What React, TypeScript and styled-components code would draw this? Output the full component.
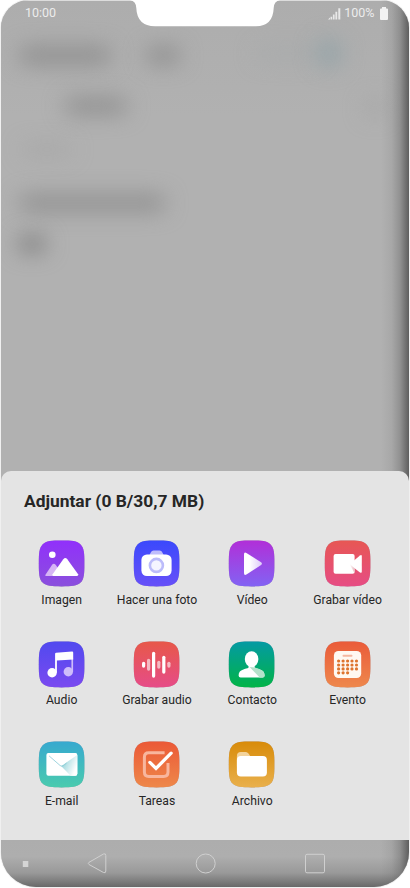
import React from 'react';
import styled, { createGlobalStyle } from 'styled-components';

const GlobalStyle = createGlobalStyle`
  html, body { margin: 0; padding: 0; background: #fff; overflow: hidden; }
  * { box-sizing: border-box; }
`;

const Phone = styled.main`
  position: relative;
  display: flex;
  flex-direction: column;
  width: 408px;
  height: 887px;
  margin: 0 1px 1px;
  overflow: hidden;
  border-radius: 28px 28px 35px 35px;
  background: #b1b1b1;
  box-shadow: 0 0 0 1px #f0f0f0;
  color: #262626;
  font-family: Roboto, sans-serif;
`;

const Backdrop = styled.section`
  position: relative;
  flex: none;
  height: 481px;
  border-top: 1px solid #dcdcdc;
  background: linear-gradient(#adadad, #b1b1b1 24%, #b1b1b1);
`;

const Smudge = styled.i<{ $x: number; $y: number; $w: number; $h: number; $color?: string; $soft?: number }>`
  position: absolute;
  left: ${(p) => p.$x}px;
  top: ${(p) => p.$y}px;
  width: ${(p) => p.$w}px;
  height: ${(p) => p.$h}px;
  border-radius: 10px;
  background: ${(p) => p.$color ?? '#898989'};
  filter: blur(${(p) => p.$soft ?? 11}px);
`;

const EdgeShade = styled.div`
  position: absolute;
  inset: 0 0 0 auto;
  width: 28px;
  background: linear-gradient(90deg, rgba(85, 85, 85, 0), rgba(85, 85, 85, 0.1) 38%, rgba(85, 85, 85, 0.35) 68%, rgba(80, 80, 80, 0.85));
`;

const StatusBar = styled.header`
  position: relative;
  display: flex;
  align-items: center;
  justify-content: space-between;
  height: 24px;
  padding: 0 21.5px 0 24px;
  color: #ececec;
  font-size: 12.5px;
  line-height: 24px;
`;

const StatusGroup = styled.div`
  display: flex;
  align-items: center;
`;

const Percent = styled.span`
  margin: 0 5px 0 3px;
`;

const Notch = styled.svg`
  position: absolute;
  top: -1px;
  left: 129px;
`;

const Sheet = styled.section`
  position: relative;
  flex: none;
  height: 369px;
  margin-top: -10px;
  padding: 19px 14px 0 13px;
  border-radius: 10px 10px 0 0;
  background: #e4e4e4;
`;

const Title = styled.h1`
  margin: 0 0 0 10px;
  font-size: 17.4px;
  line-height: 22px;
  font-weight: 700;
`;

const Grid = styled.div`
  display: grid;
  grid-template-columns: repeat(4, 95.3px);
  grid-auto-rows: 100.6px;
  margin-top: 28px;
`;

const Item = styled.button`
  display: flex;
  flex-direction: column;
  align-items: center;
  padding: 0;
  border: 0;
  background: none;
  color: inherit;
  font: 12.2px/16px Roboto, sans-serif;
  white-space: nowrap;
`;

const Tile = styled.svg`
  flex: none;
  display: block;
  margin-bottom: 2.5px;
  overflow: visible;
  filter: drop-shadow(0 0.8px 0.7px rgba(40, 20, 60, 0.3));
`;

const NavBar = styled.nav`
  position: relative;
  flex: 1;
  background: linear-gradient(#adadad 0, #aeaeae 35%, #999 70%, #696969);
`;

const NavIcons = styled.svg`
  position: relative;
  display: block;
`;

const SQUIRCLE = 'M23 .2C33 .2 38.5 .5 42 4 45.5 7.5 45.8 13 45.8 23S45.5 38.7 42 42.2 33 46 23 46 7.5 45.7 4 42.2 .2 33 .2 23 .5 7.5 4 4 13 .2 23 .2Z';

type Entry = { id: string; label: string; from: string; to: string; art: React.ReactNode };

const bars = [
  [10, 6, 1], [15, 12, 0.6], [20, 26, 1], [25.2, 8, 0.6], [30.2, 18, 1], [35.3, 6, 0.6],
];
const days = [19.6, 23.6, 27.5, 31.4].flatMap((y, row) =>
  [14, 18.5, 23, 27.4, 31.9].slice(0, row === 3 ? 3 : 5).map((x) => [x, y]),
);

const entries: Entry[] = [
  {
    id: 'image', label: 'Imagen', from: '#9130fb', to: '#8a50dc',
    art: (
      <>
        <circle cx="13.7" cy="14.3" r="3.3" fill="#fff" />
        <path d="M7 34 13.5 24.3Q15.2 22.3 17 24.3L22 31 17 35.6H8Q6 35.6 7 34Z" fill="#d6b5f5" />
        <path d="M14 33.9 24.7 18.8Q26.7 16.5 28.7 18.8L39.5 33.9Q40 35.6 38.3 35.6H15Q13.2 35.6 14 33.9Z" fill="#fff" />
      </>
    ),
  },
  {
    id: 'photo', label: 'Hacer una foto', from: '#3b49fc', to: '#6750f8',
    art: (
      <>
        <path d="M15.5 15C17 13 17.5 10 20 10H26C28.5 10 29 13 30.5 15Z" fill="#bfbdfb" />
        <rect x="7.8" y="14" width="30.2" height="21.7" rx="5.5" fill="#fff" />
        <circle cx="22.8" cy="25" r="6.5" fill="#f5f5ff" stroke="#bcbcfa" strokeWidth="2.6" />
      </>
    ),
  },
  {
    id: 'video', label: 'Vídeo', from: '#b12fd8', to: '#8263f3',
    art: <path d="M15.4 14Q15.4 11.2 17.8 12.5L32.5 21.8Q34.2 23.2 32.5 24.6L17.8 34.2Q15.4 35.5 15.4 32.5Z" fill="url(#play-fade)" />,
  },
  {
    id: 'record', label: 'Grabar vídeo', from: '#e75754', to: '#e64c84',
    art: (
      <>
        <rect x="9" y="13.7" width="21" height="19.7" rx="2" fill="#fff" />
        <path d="M27 22 35.4 15Q37.2 13.8 37.2 16V31Q37.2 33.2 35.4 32L27 25.5Z" fill="#fff" />
        <path d="M25 23.5 30 27.8V33L25 23.5Z" fill="url(#lens-fade)" />
      </>
    ),
  },
  {
    id: 'audio', label: 'Audio', from: '#5149ef', to: '#7a4af0',
    art: (
      <>
        <circle cx="29.7" cy="30.4" r="4.7" fill="#cebcfa" />
        <path d="M32.8 17H34.5V30.4H32.8Z" fill="#cebcfa" />
        <circle cx="13.5" cy="31.3" r="4.7" fill="#fff" />
        <path d="M16.5 12.5Q16.5 11.5 17.5 11.4L33.5 10.2Q34.6 10.2 34.6 11.2V18L18.3 19.2V31.3H16.5Z" fill="#fff" />
      </>
    ),
  },
  {
    id: 'voice', label: 'Grabar audio', from: '#e75849', to: '#e64c88',
    art: bars.map(([x, h, o]) => (
      <rect key={x} x={x - 1.6} y={23.3 - h / 2} width="3.2" height={h} rx="1.6" fill="#fff" fillOpacity={o} />
    )),
  },
  {
    id: 'contact', label: 'Contacto', from: '#049aa3', to: '#02b447',
    art: (
      <>
        <path d="M20 22H26V26C28 28 36 27 36 34Q36 36 34 36H12Q10 36 10 34C10 27 18 28 20 26Z" fill="#fff" />
        <path d="M21 25.5 26.5 26C29 28 36 27 36 34Q36 36 34 36H31Z" fill="#b5e2cb" />
        <ellipse cx="23" cy="17.7" rx="6.8" ry="7.9" fill="#fff" />
      </>
    ),
  },
  {
    id: 'event', label: 'Evento', from: '#ea5b39', to: '#ee884d',
    art: (
      <>
        <rect x="9.3" y="9.5" width="27.3" height="27.2" rx="4.5" fill="#fff8f2" />
        <rect x="17.9" y="13.4" width="10" height="1.9" rx="0.9" fill="#f5b6a0" />
        {days.map(([x, y]) => <circle key={`${x}-${y}`} cx={x} cy={y} r="1.6" fill="#de742f" />)}
      </>
    ),
  },
  {
    id: 'mail', label: 'E-mail', from: '#37a9cf', to: '#4acbae',
    art: (
      <>
        <rect x="7.8" y="11.7" width="30.9" height="22.7" rx="2" fill="#fff" />
        <path d="M22.5 24.5 38.7 13.5V32.4Q38.7 34.4 36.7 34.4H32Z" fill="url(#mail-fade)" />
        <path d="M9 12 22 23.4Q23.2 24.4 24.4 23.4L38 12Z" fill="#fff" />
        <path d="M10.5 14.5 21.5 24.1Q23.2 25.5 25 24.1L28 21.7" fill="none" stroke="#88cad5" strokeWidth="0.8" />
      </>
    ),
  },
  {
    id: 'tasks', label: 'Tareas', from: '#eb5937', to: '#ee884a',
    art: (
      <>
        <path d="M31 11.4H15.2Q10.8 11.4 10.8 15.8V30.6Q10.8 35 15.2 35H30Q34.4 35 34.4 30.6V21.5" fill="none" stroke="#f8b69e" strokeWidth="3" />
        <path d="M16.3 21 22.4 27 37.5 11.8" fill="none" stroke="#fff" strokeWidth="3.3" strokeLinecap="round" />
      </>
    ),
  },
  {
    id: 'file', label: 'Archivo', from: '#d88b09', to: '#e9b04c',
    art: (
      <>
        <path d="M8.3 25V14.5Q8.3 10.5 12.3 10.5H17Q19.5 10.5 21.5 14.5L24 18Z" fill="#f3d39b" />
        <rect x="8.3" y="14.5" width="30" height="20.5" rx="4" fill="#fff" />
      </>
    ),
  },
];

function AppIcon({ entry }: { entry: Entry }) {
  const id = `tile-${entry.id}`;
  return (
    <Tile width="46" height="49" viewBox="0.4 -0.4 46 49">
      <defs>
        <linearGradient id={id} x1="0" y1="0" x2="0" y2="1">
          <stop stopColor={entry.from} />
          <stop offset="1" stopColor={entry.to} />
        </linearGradient>
        <linearGradient id="play-fade">
          <stop offset="0.3" stopColor="#fff" />
          <stop offset="1" stopColor="#ddcafa" />
        </linearGradient>
        <linearGradient id="lens-fade">
          <stop stopColor="#fff" />
          <stop offset="1" stopColor="#e8b9bf" />
        </linearGradient>
        <linearGradient id="mail-fade" x1="0" y1="0" x2="1" y2="0.5">
          <stop stopColor="#80cbd2" />
          <stop offset="1" stopColor="#fff" />
        </linearGradient>
      </defs>
      <path d={SQUIRCLE} fill={`url(#${id})`} />
      {entry.art}
    </Tile>
  );
}

export default function App() {
  return (
    <>
      <GlobalStyle />
      <Phone>
        <Backdrop>
          <Smudge $x={18} $y={47} $w={92} $h={15} />
          <Smudge $x={145} $y={47} $w={34} $h={15} />
          <Smudge $x={64} $y={98} $w={62} $h={14} />
          <Smudge $x={22} $y={145} $w={48} $h={7} $color="#a0a0a0" />
          <Smudge $x={18} $y={195} $w={146} $h={14} />
          <Smudge $x={17} $y={236} $w={28} $h={14} $color="#757575" />
          <Smudge $x={256} $y={47} $w={60} $h={11} $color="#a7aaab" />
          <Smudge $x={316} $y={39} $w={24} $h={26} $color="#93a3a8" />
          <Smudge $x={365} $y={100} $w={18} $h={14} $color="#a2a2a2" />
          <EdgeShade />
          <StatusBar>
            <span>10:00</span>
            <StatusGroup>
              <svg width="13" height="13" viewBox="0 0 13 13" fill="#e8e8e8">
                <path d="M0 12.5 2 10.5V12.5ZM2.5 9.8H4.2V12.5H2.5ZM4.9 7.5H6.6V12.5H4.9ZM7.4 4.8H9.2V12.5H7.4ZM10.3 1.2H12.3V12.5H10.3Z" />
              </svg>
              <Percent>100%</Percent>
              <svg width="8" height="13" viewBox="0 0 8 13" fill="#f2f2f2">
                <path d="M2 0H6V1.5H7Q8 1.5 8 2.5V12Q8 13 7 13H1Q0 13 0 12V2.5Q0 1.5 1 1.5H2Z" />
              </svg>
            </StatusGroup>
          </StatusBar>
          <Notch width="150" height="27" viewBox="0 0 150 27">
            <path d="M0 0Q6 1 6.3 8Q7 26 25 26.3H126Q143 26 143.7 8Q144 1 150 0Z" fill="#fff" />
          </Notch>
        </Backdrop>
        <Sheet>
          <Title>Adjuntar (0 B/30,7 MB)</Title>
          <Grid>
            {entries.map((entry) => (
              <Item key={entry.id}>
                <AppIcon entry={entry} />
                {entry.label}
              </Item>
            ))}
          </Grid>
        </Sheet>
        <NavBar>
          <EdgeShade />
          <NavIcons width="408" height="47" viewBox="1 840 408 47" fill="none" stroke="#cfcfcf">
            <rect x="22.8" y="861" width="5.5" height="6" fill="#d5d5d5" stroke="none" />
            <path d="M89 862.3 103.5 854Q105.8 853 105.8 855.5V871Q105.8 873.5 103.5 872.5L89 864.5Q87.5 863.4 89 862.3Z" />
            <circle cx="205.7" cy="863.5" r="9.5" />
            <rect x="305.5" y="854.3" width="19" height="18.5" rx="1.5" />
          </NavIcons>
        </NavBar>
      </Phone>
    </>
  );
}
